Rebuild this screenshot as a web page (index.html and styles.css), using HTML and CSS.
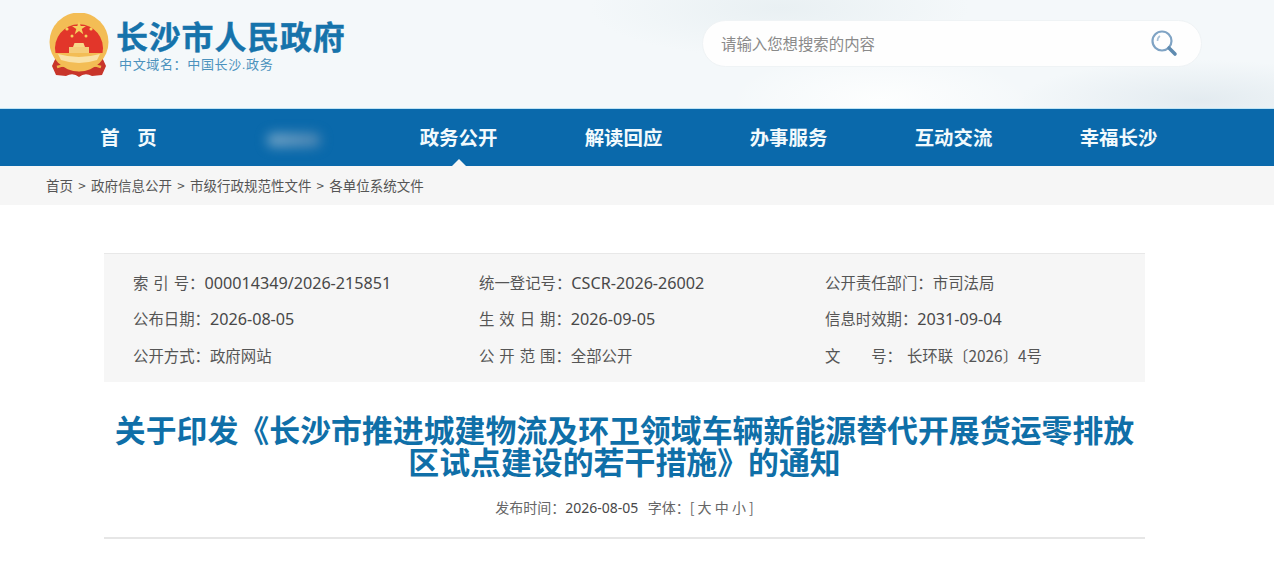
FILE: index.html
```html
<!DOCTYPE html>
<html lang="zh-CN">
<head>
    <meta charset="UTF-8">
    <meta name="viewport" content="width=device-width, initial-scale=1.0">
    <title>关于印发《长沙市推进城建物流及环卫领域车辆新能源替代开展货运零排放区试点建设的若干措施》的通知</title>
    <link rel="stylesheet" href="styles.css">
</head>
<body>
    <header class="header">
        <div class="logo">
            <svg class="emblem" viewBox="0 0 60 64" width="60" height="64">
                <path d="M8 42 L3 53 L7 62 L17 63 Q24 59 30 64 Q36 59 43 63 L53 62 L57 53 L52 42 Z" fill="#c8352a"/>
                <path d="M8 54 Q20 50 30 57 Q40 50 52 54" fill="none" stroke="#f0b94a" stroke-width="2.4"/>
                <circle cx="30" cy="29" r="29.5" fill="#f3bd55"/>
                <path d="M6.5 40 A24 24 0 1 1 53.5 40 Z" fill="#e2362a"/>
                <path d="M30 8 L31.7 13 L37 13 L32.7 16.1 L34.3 21.2 L30 18.1 L25.7 21.2 L27.3 16.1 L23 13 L28.3 13 Z" fill="#f7cf5d"/>
                <circle cx="18" cy="16" r="1.6" fill="#f7cf5d"/>
                <circle cx="42" cy="16" r="1.6" fill="#f7cf5d"/>
                <circle cx="23" cy="23" r="1.5" fill="#f7cf5d"/>
                <circle cx="37" cy="23" r="1.5" fill="#f7cf5d"/>
                <path d="M24 34 L25.5 30 H34.5 L36 34 Z" fill="#f7d98a"/>
                <rect x="20" y="34" width="20" height="6" fill="#f5cd7a"/>
                <path d="M9 41 Q30 47 51 41 L48 47 Q30 53 12 47 Z" fill="#f9e2a8"/>
            </svg>
            <div class="logo-text">
                <div class="site-name">长沙市人民政府</div>
                <div class="site-domain">中文域名：中国长沙.政务</div>
            </div>
        </div>
        <div class="search">
            <span class="search-hint">请输入您想搜索的内容</span>
            <svg class="search-icon" viewBox="0 0 28 28" width="28" height="28">
                <circle cx="12" cy="12" r="9.5" fill="none" stroke="#7fa3c4" stroke-width="2.2"/>
                <path d="M7.5 12 Q7.5 8.5 10 7" fill="none" stroke="#a9c2d8" stroke-width="1.6"/>
                <path d="M19 19 L25 25" stroke="#5f8bb0" stroke-width="3.6" stroke-linecap="round"/>
            </svg>
        </div>
    </header>

    <nav class="nav">
        <a class="nav-item">首&nbsp;&nbsp;&nbsp;&nbsp;页</a>
        <a class="nav-item"><span class="smudge"></span></a>
        <a class="nav-item active">政务公开</a>
        <a class="nav-item">解读回应</a>
        <a class="nav-item">办事服务</a>
        <a class="nav-item">互动交流</a>
        <a class="nav-item">幸福长沙</a>
    </nav>

    <div class="crumbs">首页 &gt; 政府信息公开 &gt; 市级行政规范性文件 &gt; 各单位系统文件</div>

    <main class="article">
        <div class="meta">
            <div>索 引 号：<span class="num">000014349/2026-215851</span></div>
            <div>统一登记号：<span class="num">CSCR-2026-26002</span></div>
            <div>公开责任部门：市司法局</div>
            <div>公布日期：<span class="num">2026-08-05</span></div>
            <div>生 效 日 期：<span class="num">2026-09-05</span></div>
            <div>信息时效期：<span class="num">2031-09-04</span></div>
            <div>公开方式：政府网站</div>
            <div>公 开 范 围：全部公开</div>
            <div>文&emsp;&emsp;号：&nbsp;长环联〔2026〕4号</div>
        </div>

        <h1 class="title">关于印发《长沙市推进城建物流及环卫领域车辆新能源替代开展货运零排放区试点建设的若干措施》的通知</h1>

        <div class="info">发布时间：<span class="num">2026-08-05</span>&nbsp;&nbsp;&nbsp;字体：[ 大 中 小 ]</div>
    </main>
</body>
</html>
```

FILE: styles.css
```css
* {
    box-sizing: border-box;
}
html, body {
    height: 100%;
}
body {
    margin: 0;
    overflow: hidden;
    background: #fff;
    color: #555;
    font-family: "Noto Sans CJK SC", "Liberation Sans", sans-serif;
}
.header {
    height: 108px;
    display: flex;
    justify-content: space-between;
    align-items: flex-start;
    padding: 13px 72px 0 49px;
    background:
        radial-gradient(ellipse 150px 50px at 880px 100px, #fdfefe 0%, rgba(253,254,254,0) 100%),
        radial-gradient(ellipse 190px 50px at 780px 8px, #e9f0f3 0%, rgba(233,240,243,0) 100%),
        radial-gradient(ellipse 180px 40px at 1200px 100px, #e3ebf0 0%, rgba(227,235,240,0) 100%),
        #f4f8fa;
}
.logo {
    display: flex;
    gap: 8px;
}
.logo-text {
    padding-top: 8px;
}
.site-name {
    font-family: "Liberation Sans", "Noto Sans CJK SC", sans-serif;
    font-size: 32px;
    line-height: 34px;
    font-weight: 700;
    letter-spacing: 0.8px;
    margin-left: -1px;
    -webkit-text-stroke: 0.4px #1673ab;
    color: #1673ab;
}
.site-domain {
    font-family: "Liberation Sans", "Noto Sans CJK SC", sans-serif;
    margin: 2px 0 0 2px;
    font-size: 13px;
    line-height: 15px;
    letter-spacing: 0.65px;
    color: #4b92bd;
}
.search {
    width: 500px;
    height: 47px;
    margin-top: 7px;
    padding: 0 23px 2px 18px;
    display: flex;
    justify-content: space-between;
    align-items: center;
    background: #fefefe;
    border: 1px solid #eff3f5;
    border-radius: 24px;
}
.search-hint {
    font-size: 15.4px;
    color: #8a8a8a;
}
.nav {
    height: 58px;
    padding: 0 0 0 46px;
    display: grid;
    grid-template-columns: repeat(7, 165px);
    align-items: center;
    background: #0a69ab;
    border-top: 1px solid #bfe4f5;
}
.nav-item {
    position: relative;
    display: flex;
    height: 100%;
    padding-bottom: 2px;
    justify-content: center;
    align-items: center;
    font-size: 19.4px;
    font-weight: 700;
    color: #f2fafd;
}
.active::after {
    content: "";
    position: absolute;
    bottom: 0;
    left: 50%;
    margin-left: -7px;
    border: 7px solid transparent;
    border-top: 0;
    border-bottom-color: #f6f6f6;
}
.smudge {
    width: 54px;
    height: 14px;
    margin-top: 6px;
    background: linear-gradient(90deg, #6fa3c6, #4c86b3);
    border-radius: 8px;
    filter: blur(6px);
}
.crumbs {
    height: 39px;
    padding: 0 0 2px 46px;
    display: flex;
    align-items: center;
    background: #f6f6f6;
    font-size: 13.5px;
    word-spacing: 2.2px;
    color: #555;
}
.article {
    width: 1041px;
    margin: 48px 0 0 104px;
}
.meta {
    height: 129px;
    padding: 10px 0 0 29px;
    display: grid;
    grid-template-columns: 346px 346px 1fr;
    grid-auto-rows: 36.5px;
    align-items: center;
    background: #f6f6f6;
    border-top: 1px solid #e8e8e8;
    font-size: 15.4px;
    word-spacing: 1.5px;
    color: #555;
}
.num {
    color: #484848;
    font-size: 1.05em;
    font-family: "Noto Sans", "Noto Sans CJK SC", sans-serif;
}
.title {
    margin: 31px 0 0;
    font-size: 30.9px;
    line-height: 32px;
    font-weight: 700;
    text-align: center;
    color: #0f6fa8;
}
.info {
    height: 62px;
    padding-top: 20px;
    border-bottom: 2px solid #e6e6e6;
    text-align: center;
    font-size: 14px;
    color: #666;
}
.info .num {
    font-size: 14px;
}
```
